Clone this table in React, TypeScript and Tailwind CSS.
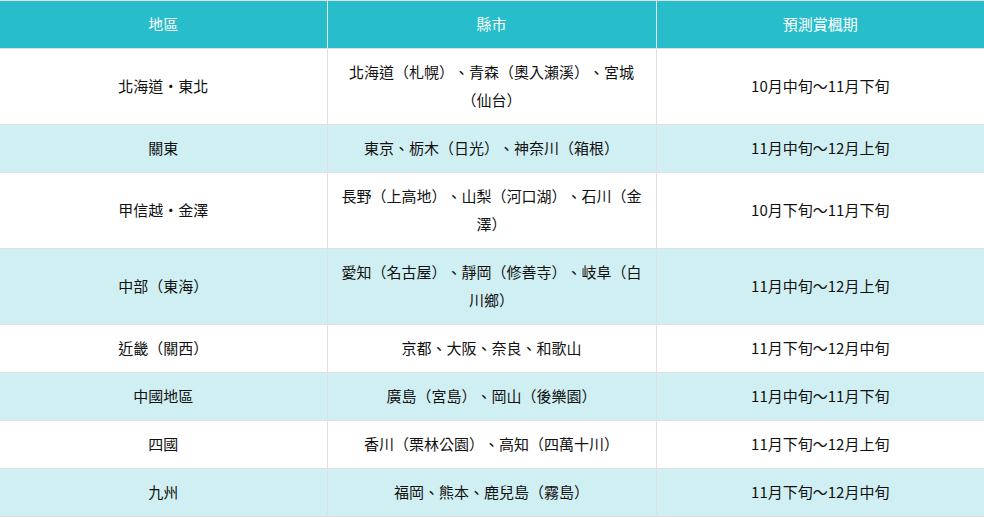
const rows = [
  { region: '北海道・東北', cities: '北海道（札幌）、青森（奧入瀨溪）、宮城（仙台）', period: '10月中旬～11月下旬' },
  { region: '關東', cities: '東京、栃木（日光）、神奈川（箱根）', period: '11月中旬～12月上旬' },
  { region: '甲信越・金澤', cities: '長野（上高地）、山梨（河口湖）、石川（金澤）', period: '10月下旬～11月下旬' },
  { region: '中部（東海）', cities: '愛知（名古屋）、靜岡（修善寺）、岐阜（白川鄉）', period: '11月中旬～12月上旬' },
  { region: '近畿（關西）', cities: '京都、大阪、奈良、和歌山', period: '11月下旬～12月中旬' },
  { region: '中國地區', cities: '廣島（宮島）、岡山（後樂園）', period: '11月中旬～11月下旬' },
  { region: '四國', cities: '香川（栗林公園）、高知（四萬十川）', period: '11月下旬～12月上旬' },
  { region: '九州', cities: '福岡、熊本、鹿兒島（霧島）', period: '11月下旬～12月中旬' },
];

export default function App() {
  return (
    <div className="min-h-screen w-full bg-white font-['Noto_Sans_CJK_TC','Noto_Sans',sans-serif] text-[15px] leading-[28px] text-[#111] [text-spacing-trim:space-all]">
      <table className="w-full table-fixed border-collapse border-t border-[#e0e0e0]">
        <colgroup>
          <col className="w-[327px]" />
          <col className="w-[329px]" />
          <col />
        </colgroup>
        <thead>
          <tr className="bg-[#28bdcb] text-white">
            <th className="border-b border-r border-[#e0e0e0] px-[10px] pb-[10px] pt-[9px] text-center font-normal">地區</th>
            <th className="border-b border-r border-[#e0e0e0] px-[10px] pb-[10px] pt-[9px] text-center font-normal">縣市</th>
            <th className="border-b border-[#e0e0e0] px-[10px] pb-[10px] pt-[9px] text-center font-normal">預測賞楓期</th>
          </tr>
        </thead>
        <tbody>
          {rows.map((row, i) => (
            <tr key={row.region} className={i % 2 === 1 ? 'bg-[#d0eff2]' : 'bg-white'}>
              <td className="border-b border-r border-[#e0e0e0] px-[10px] pb-[10px] pt-[9px] text-center align-middle">{row.region}</td>
              <td className="border-b border-r border-[#e0e0e0] px-[10px] pb-[10px] pt-[9px] text-center align-middle">{row.cities}</td>
              <td className="border-b border-[#e0e0e0] px-[10px] pb-[10px] pt-[9px] text-center align-middle">{row.period}</td>
            </tr>
          ))}
        </tbody>
      </table>
    </div>
  );
}
